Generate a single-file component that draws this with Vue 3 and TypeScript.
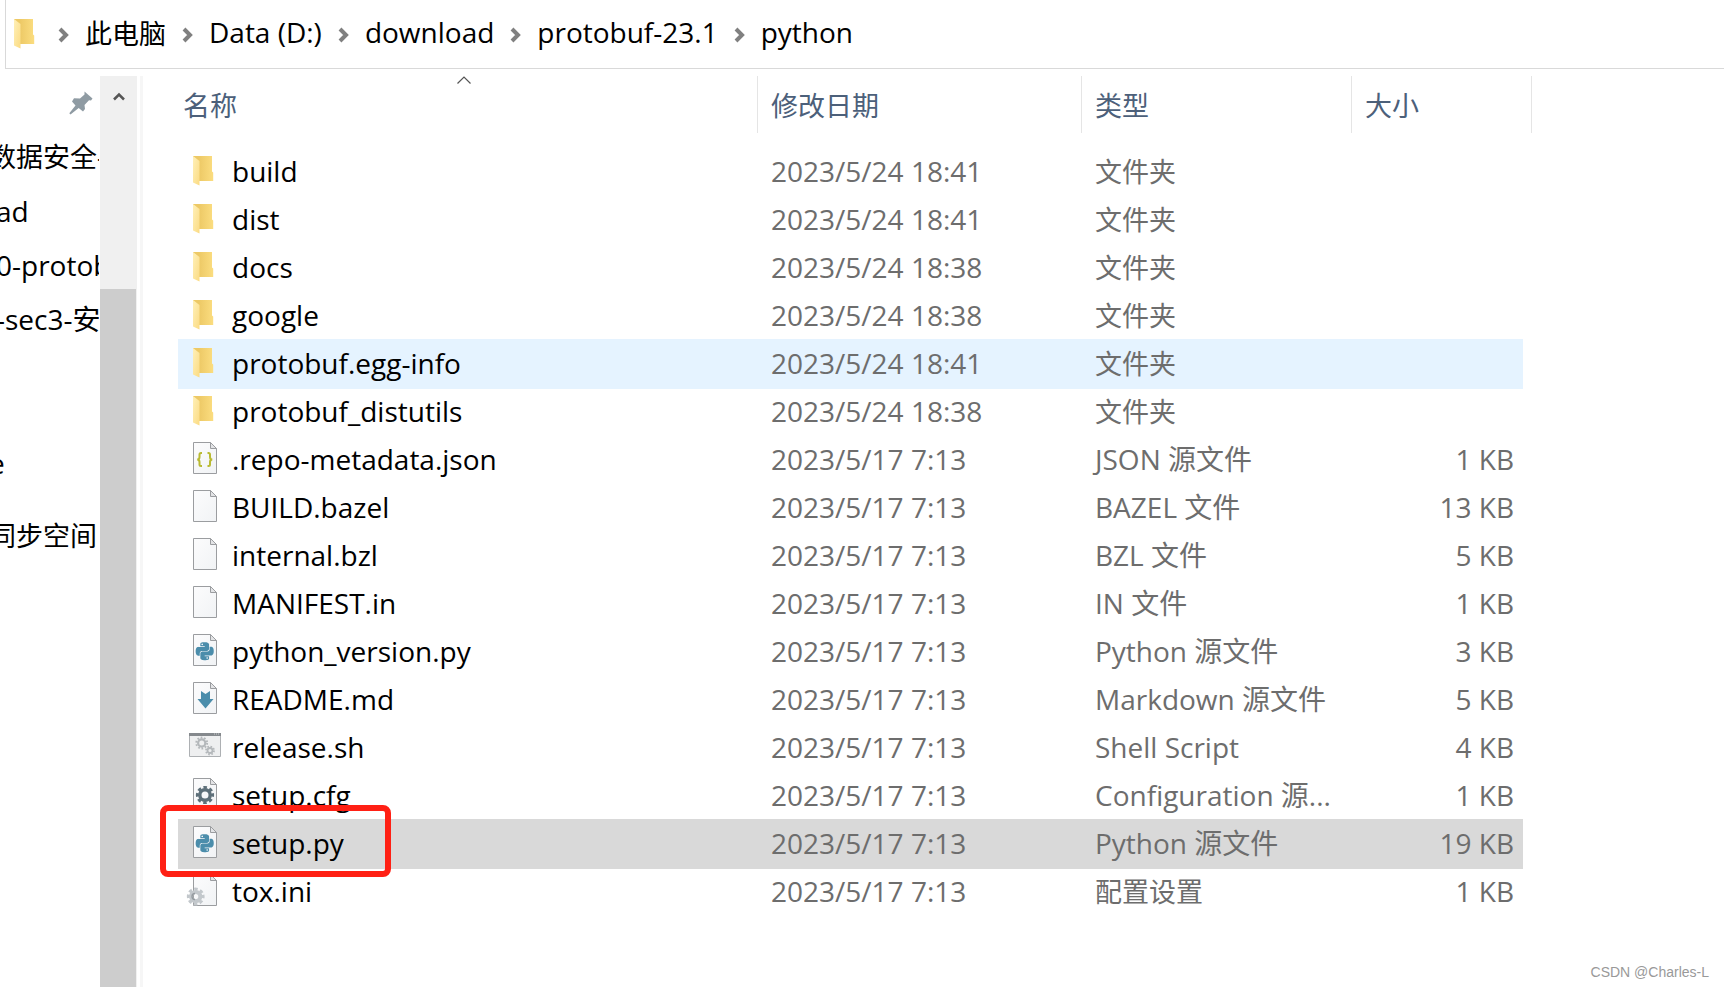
<script setup lang="ts">
type IconKind = 'folder' | 'json' | 'file' | 'python' | 'markdown' | 'shell' | 'config' | 'ini'

interface Entry {
  name: string
  modified: string
  type: string
  size: string
  icon: IconKind
  state?: 'hovered' | 'selected'
}

interface PlaceItem {
  label: string
  cut?: boolean
  gap?: 'large' | 'small'
}

const crumbs: string[] = ['此电脑', 'Data (D:)', 'download', 'protobuf-23.1', 'python']

const places: PlaceItem[] = [
  { label: '数据安全-', cut: true },
  { label: 'ad' },
  { label: '0-protob' },
  { label: '-sec3-安' },
  { label: 'e', cut: true, gap: 'large' },
  { label: '同步空间', cut: true, gap: 'small' },
]

const folder = (name: string, time: string, state?: Entry['state']): Entry => ({
  name,
  modified: `2023/5/24 ${time}`,
  type: '文件夹',
  size: '',
  icon: 'folder',
  state,
})

const file = (name: string, type: string, kb: number, icon: IconKind, state?: Entry['state']): Entry => ({
  name,
  modified: '2023/5/17 7:13',
  type,
  size: `${kb} KB`,
  icon,
  state,
})

const entries: Entry[] = [
  folder('build', '18:41'),
  folder('dist', '18:41'),
  folder('docs', '18:38'),
  folder('google', '18:38'),
  folder('protobuf.egg-info', '18:41', 'hovered'),
  folder('protobuf_distutils', '18:38'),
  file('.repo-metadata.json', 'JSON 源文件', 1, 'json'),
  file('BUILD.bazel', 'BAZEL 文件', 13, 'file'),
  file('internal.bzl', 'BZL 文件', 5, 'file'),
  file('MANIFEST.in', 'IN 文件', 1, 'file'),
  file('python_version.py', 'Python 源文件', 3, 'python'),
  file('README.md', 'Markdown 源文件', 5, 'markdown'),
  file('release.sh', 'Shell Script', 4, 'shell'),
  file('setup.cfg', 'Configuration 源...', 1, 'config'),
  file('setup.py', 'Python 源文件', 19, 'python', 'selected'),
  file('tox.ini', '配置设置', 1, 'ini'),
]

const hasSheet = (icon: IconKind): boolean => icon !== 'folder' && icon !== 'shell'

// Labels written only in Han characters are set one step smaller than Latin ones.
const isHan = (text: string): boolean => /^[\u4e00-\u9fff]/.test(text)
</script>

<template>
  <div class="explorer">
    <svg class="defs" width="0" height="0" aria-hidden="true">
      <defs>
        <linearGradient id="folder-back" x1="0" x2="1" y1="0" y2="0">
          <stop offset="0.3" stop-color="#edc966" />
          <stop offset="1" stop-color="#fbdd80" />
        </linearGradient>
        <linearGradient id="folder-flap" x1="0" x2="1" y1="0" y2="1">
          <stop offset="0" stop-color="#fff0b8" />
          <stop offset="1" stop-color="#fbdb83" />
        </linearGradient>
        <linearGradient id="sheet" x1="0" x2="1" y1="0" y2="1">
          <stop offset="0" stop-color="#fcfcfd" />
          <stop offset="1" stop-color="#f1f3f5" />
        </linearGradient>
        <symbol id="folder-icon" viewBox="0 0 32 32">
          <path d="M4 2h19v15.500l1.200 1v8.500H4z" fill="url(#folder-back)" />
          <path d="M4 2l6.500 5v24.500L4 28.500z" fill="url(#folder-flap)" />
        </symbol>
      </defs>
    </svg>

    <nav class="address" aria-label="地址">
      <svg class="icon" viewBox="0 0 32 32" aria-hidden="true"><use href="#folder-icon" /></svg>
      <template v-for="crumb in crumbs" :key="crumb">
        <svg class="chevron" viewBox="0 0 11 16" aria-hidden="true">
          <path d="M2 2l6 6-6 6" fill="none" stroke="#808080" stroke-width="4" />
        </svg>
        <a class="crumb" :class="{ han: isHan(crumb) }" href="#">{{ crumb }}</a>
      </template>
    </nav>

    <div class="body">
      <aside class="sidebar">
        <nav class="places" aria-label="快速访问">
          <div class="pin-row">
            <svg class="pin" viewBox="0 0 24 24" aria-hidden="true">
              <path
                d="M15.500 0.500L23.500 7.500l-1.500 2-2-.2-4.500 4.700.5 4-2 2.500-4.300-3.500L1.500 23.500l-1.200-1.200L6.500 14.500 3 10.500 5 7.300l6 .2 4.500-4z"
                fill="#8f9ba3"
              />
            </svg>
          </div>
          <a
            v-for="place in places"
            :key="place.label"
            class="place"
            :class="[{ cut: place.cut, han: isHan(place.label) }, place.gap && `gap-${place.gap}`]"
            href="#"
            >{{ place.label }}</a
          >
        </nav>
        <div class="scrollbar">
          <button class="scroll-up" type="button" aria-label="向上滚动">
            <svg viewBox="0 0 12 9" width="12" height="9" aria-hidden="true">
              <path d="M1 7.500L6 2.500l5 5" fill="none" stroke="#555" stroke-width="2.500" />
            </svg>
          </button>
          <div class="thumb"></div>
        </div>
      </aside>

      <main class="content">
        <table class="files">
          <colgroup>
            <col />
            <col class="col-date" />
            <col class="col-type" />
            <col class="col-size" />
          </colgroup>
          <thead>
            <tr>
              <th scope="col" class="first" aria-sort="ascending">
                <button type="button">名称</button>
                <svg class="sort" viewBox="0 0 14 8" aria-hidden="true">
                  <path d="M0.500 7.500L7 1l6.500 6.500" fill="none" stroke="#555" stroke-width="1.200" />
                </svg>
              </th>
              <th scope="col"><button type="button">修改日期</button></th>
              <th scope="col"><button type="button">类型</button></th>
              <th scope="col" class="last"><button type="button">大小</button></th>
            </tr>
          </thead>
          <tbody>
            <tr v-for="entry in entries" :key="entry.name" :class="entry.state">
              <td class="name">
                <div class="name-cell">
                  <svg class="icon" viewBox="0 0 32 32" aria-hidden="true">
                    <use v-if="entry.icon === 'folder'" href="#folder-icon" />
                    <g v-if="hasSheet(entry.icon)" stroke="#9b9da0">
                      <path d="M4.500 0.500h17l6 6v25h-23z" fill="url(#sheet)" />
                      <path d="M21.500 0.500v6h6z" fill="#e3e4e6" />
                    </g>
                    <g v-if="entry.icon === 'json'" fill="none" stroke="#b9ba32" stroke-width="2">
                      <path d="M13 11h-1q-1.500 0-1.500 1.500v2.500q0 2.500-2.300 2.500 2.300 0 2.300 2.500v2.500q0 1.500 1.500 1.500h1" />
                      <path d="M18.500 11h1q1.500 0 1.500 1.500v2.500q0 2.500 2.300 2.500-2.300 0-2.300 2.500v2.500q0 1.500-1.500 1.500h-1" />
                    </g>
                    <path
                      v-if="entry.icon === 'python'"
                      transform="translate(6.700 8.200) scale(0.750)"
                      fill="#4b8dab"
                      d="M14.25.18l.9.2.73.26.59.3.45.32.34.34.25.34.16.33.1.3.04.26.02.2-.01.13V8.5l-.05.63-.13.55-.21.46-.26.38-.3.31-.33.25-.35.19-.35.14-.33.1-.3.07-.26.04-.21.02H8.77l-.69.05-.59.14-.5.22-.41.27-.33.32-.27.35-.2.36-.15.37-.1.35-.07.32-.04.27-.02.21v3.06H3.17l-.21-.03-.28-.07-.32-.12-.35-.18-.36-.26-.36-.36-.35-.46-.32-.59-.28-.73-.21-.88-.14-1.05-.05-1.23.06-1.22.16-1.04.24-.87.32-.71.36-.57.4-.44.42-.33.42-.24.4-.16.36-.1.32-.05.24-.01h.16l.06.01h8.16v-.83H6.18l-.01-2.75-.02-.37.05-.34.11-.31.17-.28.25-.26.31-.23.38-.2.44-.18.51-.15.58-.12.64-.1.71-.06.77-.04.84-.02 1.27.05zm-6.3 1.98l-.23.33-.08.41.08.41.23.34.33.22.41.09.41-.09.33-.22.23-.34.08-.41-.08-.41-.23-.33-.33-.22-.41-.09-.41.09zm13.09 3.95l.28.06.32.12.35.18.36.27.36.35.35.47.32.59.28.73.21.88.14 1.04.05 1.23-.06 1.23-.16 1.04-.24.86-.32.71-.36.57-.4.45-.42.33-.42.24-.4.16-.36.09-.32.05-.24.02-.16-.01h-8.22v.82h5.84l.01 2.76.02.36-.05.34-.11.31-.17.29-.25.25-.31.24-.38.2-.44.17-.51.15-.58.13-.64.09-.71.07-.77.04-.84.01-1.27-.04-1.07-.14-.9-.2-.73-.25-.59-.3-.45-.33-.34-.34-.25-.34-.16-.33-.1-.3-.04-.25-.02-.2.01-.13v-5.34l.05-.64.13-.54.21-.46.26-.38.3-.32.33-.24.35-.2.35-.14.33-.1.3-.06.26-.04.21-.02.13-.01h5.84l.69-.05.59-.14.5-.21.41-.28.33-.32.27-.35.2-.36.15-.36.1-.35.07-.32.04-.28.02-.21V6.07h2.09l.14.01zm-6.47 14.25l-.23.33-.08.41.08.41.23.33.33.23.41.08.41-.08.33-.23.23-.33.08-.41-.08-.41-.23-.33-.33-.23-.41-.08-.41.08z"
                    />
                    <path
                      v-if="entry.icon === 'markdown'"
                      d="M12 9l4.500 3L21 9v8h3.500l-8 9.500-8-9.500H12z"
                      fill="#4b8dab"
                    />
                    <g v-if="entry.icon === 'shell'" fill="none">
                      <path d="M0.500 3.500h31v23h-31z" fill="#eeeff0" stroke="#adb0b3" />
                      <path d="M0 4.500h32" stroke="#85898d" stroke-width="3" />
                      <path d="M25 4h5" stroke="#c9cbce" stroke-dasharray="1 1" />
                      <g stroke="#b4b8bb">
                        <circle cx="12.700" cy="13" r="3.600" stroke-width="2.200" />
                        <circle cx="12.700" cy="13" r="5.400" stroke-width="2" stroke-dasharray="1.700 1.693" />
                        <circle cx="21" cy="20.500" r="2.500" stroke-width="1.800" />
                        <circle cx="21" cy="20.500" r="4" stroke-width="1.800" stroke-dasharray="1.600 1.542" />
                      </g>
                    </g>
                    <g v-if="entry.icon === 'config'" fill="none" stroke="#5d6f79">
                      <circle cx="16" cy="17" r="5.200" stroke-width="3.400" />
                      <circle
                        cx="16"
                        cy="17"
                        r="7.600"
                        stroke-width="3"
                        stroke-dasharray="3.400 2.569"
                        transform="rotate(-13 16 17)"
                      />
                    </g>
                    <g v-if="entry.icon === 'ini'" fill="none" stroke="#c3c8cc">
                      <circle cx="6.700" cy="22.500" r="4.600" stroke-width="4" />
                      <circle
                        cx="6.700"
                        cy="22.500"
                        r="7.400"
                        stroke-width="3"
                        stroke-dasharray="3.400 2.412"
                        transform="rotate(-13 6.700 22.500)"
                      />
                      <path d="M6 19.500a3 3 0 0 0 0 6" stroke="#969ca1" stroke-width="1.400" />
                    </g>
                  </svg>
                  <span>{{ entry.name }}</span>
                </div>
                <span v-if="entry.state === 'selected'" class="marker"></span>
              </td>
              <td>{{ entry.modified }}</td>
              <td :class="{ han: isHan(entry.type) }">{{ entry.type }}</td>
              <td class="size">{{ entry.size }}</td>
            </tr>
          </tbody>
        </table>
        <footer class="watermark">CSDN @Charles-L</footer>
      </main>
    </div>
  </div>
</template>

<style>
body {
  margin: 0;
  background: #fff;
}
</style>

<style scoped>
.explorer {
  display: flex;
  flex-direction: column;
  min-height: 100vh;
  font-family: 'Open Sans', 'Noto Sans CJK SC', sans-serif;
  font-size: 28px;
  color: #000;
  background: #fff;
}

.han {
  font-size: 27px;
}

.defs {
  position: absolute;
}

a {
  color: inherit;
  text-decoration: none;
}

button {
  padding: 0;
  border: 0;
  background: none;
  font: inherit;
  color: inherit;
}

.icon {
  flex: none;
  width: 32px;
  height: 32px;
  overflow: visible;
}

.address {
  display: flex;
  align-items: center;
  box-sizing: border-box;
  height: 69px;
  margin-left: 5px;
  padding: 0 4px 2px;
  border-left: 1px solid #d9d9d9;
  border-bottom: 1px solid #d9d9d9;
}

.chevron {
  flex: none;
  width: 11px;
  height: 16px;
  margin: 4px 16px 0;
}

.crumb {
  padding-bottom: 2px;
  white-space: nowrap;
}

.body {
  display: flex;
  flex: 1;
  padding-top: 7px;
}

.sidebar {
  display: flex;
  flex: none;
  width: 140px;
  border-right: 3px solid #f6f6f6;
}

.places {
  display: flex;
  flex-direction: column;
  width: 99px;
  margin-right: 1px;
  overflow: hidden;
}

.pin-row {
  display: flex;
  justify-content: flex-end;
  align-items: center;
  height: 54px;
  padding-right: 6px;
}

.pin {
  width: 24px;
  height: 24px;
}

.place {
  height: 54px;
  margin-left: -4px;
  line-height: 54px;
  white-space: nowrap;
}

.place.cut {
  margin-left: -11px;
}

.gap-large {
  margin-top: 90px;
}

.gap-small {
  margin-top: 19px;
}

.scrollbar {
  display: flex;
  flex-direction: column;
  width: 37px;
  background: #f0f0f0;
}

.scroll-up {
  display: flex;
  justify-content: center;
  height: 213px;
  padding-top: 16px;
}

.thumb {
  flex: 1;
  margin-right: 1px;
  background: #cdcdcd;
}

.content {
  display: flex;
  flex: 1;
  flex-direction: column;
  justify-content: space-between;
  padding-left: 35px;
}

.files {
  width: calc(100% - 201px);
  border-spacing: 0;
  table-layout: fixed;
  color: #6d6d6d;
}

.col-date {
  width: 324px;
}

.col-type {
  width: 270px;
}

.col-size {
  width: 172px;
}

th {
  position: relative;
  height: 57px;
  padding: 0 0 0 13px;
  border-left: 1px solid #e5e5e5;
  text-align: left;
  font-size: 27px;
  font-weight: 400;
  color: #4c607a;
}

th.first {
  padding-left: 5px;
  border-left: 0;
}

th.last::after {
  content: '';
  position: absolute;
  top: 0;
  right: -9px;
  width: 1px;
  height: 100%;
  background: #e5e5e5;
}

.sort {
  position: absolute;
  top: 0;
  left: calc(50% - 11px);
  width: 14px;
  height: 8px;
}

tbody::before {
  content: '';
  display: block;
  height: 15px;
}

td {
  height: 46px;
  padding: 0 0 2px 14px;
  line-height: 46px;
  white-space: nowrap;
}

td.han {
  height: 48px;
  padding-bottom: 0;
}

td.name {
  position: relative;
  padding-left: 11px;
  color: #000;
}

td.size {
  padding-right: 9px;
  text-align: right;
}

.name-cell {
  display: flex;
  align-items: center;
  gap: 11px;
}

.name-cell .icon {
  margin-bottom: 2px;
}

.hovered td {
  background: #e5f3ff;
  box-shadow: 0 -1px #e5f3ff, 0 1px #e5f3ff;
}

.selected td {
  background: #d9d9d9;
  box-shadow: 0 -1px #d9d9d9, 0 1px #d9d9d9;
}

/* Frame that calls out the selected file */
.marker {
  position: absolute;
  z-index: 1;
  top: -15px;
  left: -18px;
  box-sizing: border-box;
  width: 231px;
  height: 72px;
  border: 6px solid #ff2014;
  border-radius: 8px;
}

.watermark {
  padding: 0 15px 6px;
  text-align: right;
  font-family: 'Liberation Sans', Arial, sans-serif;
  font-size: 14px;
  line-height: 18px;
  color: #999;
}
</style>
